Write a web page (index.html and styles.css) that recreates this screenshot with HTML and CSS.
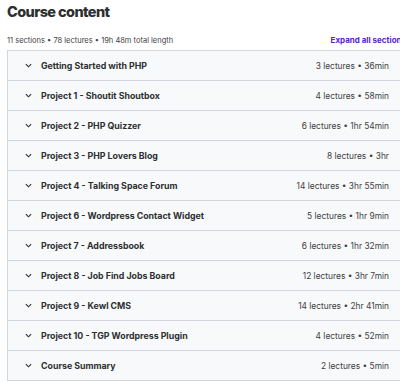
FILE: index.html
```html
<!DOCTYPE html>
<html>
<head>
<meta charset="utf-8">
<link rel="stylesheet" href="styles.css">
</head>
<body>
<div class="page">
  <h2 class="title">Course content</h2>
  <div class="meta">
    <span class="stats">11 sections • 78 lectures • 19h 48m total length</span>
    <button class="expand">Expand all sections</button>
  </div>
  <div class="sections">
    <div class="row"><span class="chev"><svg viewBox="0 0 8 5" width="7" height="5"><path d="M1 1l3 3 3-3" fill="none" stroke="#2d2f31" stroke-width="1.3"/></svg></span><span class="name">Getting Started with PHP</span><span class="info">3 lectures • 36min</span></div>
    <div class="row"><span class="chev"><svg viewBox="0 0 8 5" width="7" height="5"><path d="M1 1l3 3 3-3" fill="none" stroke="#2d2f31" stroke-width="1.3"/></svg></span><span class="name">Project 1 - Shoutit Shoutbox</span><span class="info">4 lectures • 58min</span></div>
    <div class="row"><span class="chev"><svg viewBox="0 0 8 5" width="7" height="5"><path d="M1 1l3 3 3-3" fill="none" stroke="#2d2f31" stroke-width="1.3"/></svg></span><span class="name">Project 2 - PHP Quizzer</span><span class="info">6 lectures • 1hr 54min</span></div>
    <div class="row"><span class="chev"><svg viewBox="0 0 8 5" width="7" height="5"><path d="M1 1l3 3 3-3" fill="none" stroke="#2d2f31" stroke-width="1.3"/></svg></span><span class="name">Project 3 - PHP Lovers Blog</span><span class="info">8 lectures • 3hr</span></div>
    <div class="row"><span class="chev"><svg viewBox="0 0 8 5" width="7" height="5"><path d="M1 1l3 3 3-3" fill="none" stroke="#2d2f31" stroke-width="1.3"/></svg></span><span class="name">Project 4 - Talking Space Forum</span><span class="info">14 lectures • 3hr 55min</span></div>
    <div class="row"><span class="chev"><svg viewBox="0 0 8 5" width="7" height="5"><path d="M1 1l3 3 3-3" fill="none" stroke="#2d2f31" stroke-width="1.3"/></svg></span><span class="name">Project 6 - Wordpress Contact Widget</span><span class="info">5 lectures • 1hr 9min</span></div>
    <div class="row"><span class="chev"><svg viewBox="0 0 8 5" width="7" height="5"><path d="M1 1l3 3 3-3" fill="none" stroke="#2d2f31" stroke-width="1.3"/></svg></span><span class="name">Project 7 - Addressbook</span><span class="info">6 lectures • 1hr 32min</span></div>
    <div class="row"><span class="chev"><svg viewBox="0 0 8 5" width="7" height="5"><path d="M1 1l3 3 3-3" fill="none" stroke="#2d2f31" stroke-width="1.3"/></svg></span><span class="name">Project 8 - Job Find Jobs Board</span><span class="info">12 lectures • 3hr 7min</span></div>
    <div class="row"><span class="chev"><svg viewBox="0 0 8 5" width="7" height="5"><path d="M1 1l3 3 3-3" fill="none" stroke="#2d2f31" stroke-width="1.3"/></svg></span><span class="name">Project 9 - Kewl CMS</span><span class="info">14 lectures • 2hr 41min</span></div>
    <div class="row"><span class="chev"><svg viewBox="0 0 8 5" width="7" height="5"><path d="M1 1l3 3 3-3" fill="none" stroke="#2d2f31" stroke-width="1.3"/></svg></span><span class="name">Project 10 - TGP Wordpress Plugin</span><span class="info">4 lectures • 52min</span></div>
    <div class="row"><span class="chev"><svg viewBox="0 0 8 5" width="7" height="5"><path d="M1 1l3 3 3-3" fill="none" stroke="#2d2f31" stroke-width="1.3"/></svg></span><span class="name">Course Summary</span><span class="info">2 lectures • 5min</span></div>
  </div>
</div>
</body>
</html>
```

FILE: styles.css
```css
html, body {
  margin: 0;
  padding: 0;
  background: #ffffff;
  overflow: hidden;
}
body {
  width: 400px;
  height: 382px;
  font-family: Inter, "Noto Sans", sans-serif;
  color: #2d2f31;
}
.page {
  width: 399px;
  padding-left: 7px;
}
.title {
  margin: 0;
  padding-top: 2px;
  font-size: 14.5px;
  line-height: 20px;
  font-weight: 800;
  letter-spacing: -0.6px;
  height: 28px;
}
.meta {
  display: flex;
  justify-content: space-between;
  align-items: center;
  height: 20px;
  white-space: nowrap;
}
.stats {
  font-size: 7.5px;
  color: #3e4143;
}
.expand {
  border: 0;
  background: none;
  padding: 0;
  font-family: inherit;
  font-size: 8px;
  font-weight: 700;
  color: #5624d0;
  white-space: nowrap;
}
.sections {
  border: 1px solid #d1d7dc;
  border-bottom: 0;
}
.row {
  display: flex;
  align-items: center;
  height: 29px;
  border-bottom: 1px solid #d1d7dc;
  background: #f7f9fa;
  padding: 0 16px 0 17px;
}
.chev {
  display: flex;
  width: 16px;
}
.name {
  flex: 1;
  font-size: 8.8px;
  font-weight: 700;
}
.info {
  font-size: 8.4px;
  color: #3e4143;
  white-space: nowrap;
}
```
